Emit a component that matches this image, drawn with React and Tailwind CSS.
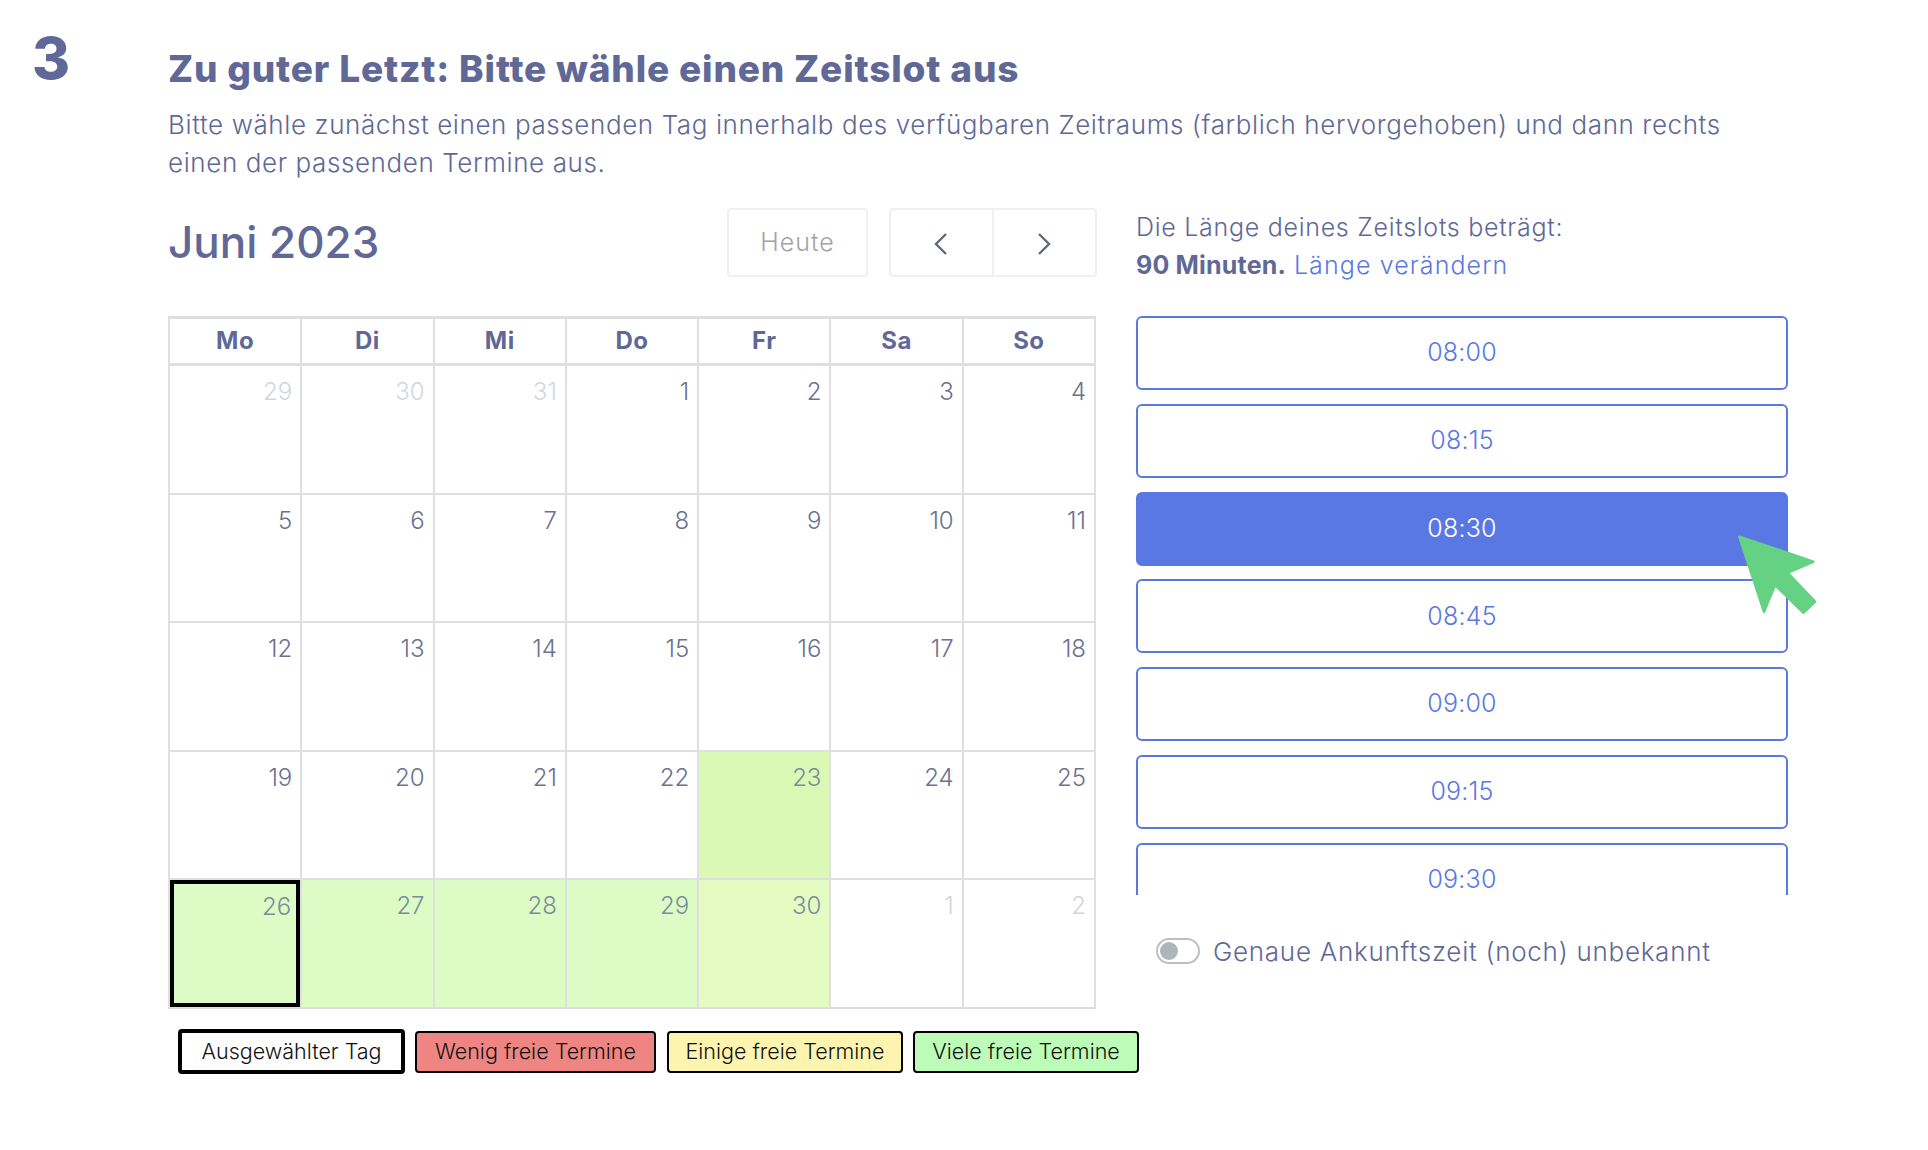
import React from "react";

const Heads = ["Mo", "Di", "Mi", "Do", "Fr", "Sa", "So"];
const Days = [
  ["29", 1, ""], ["30", 1, ""], ["31", 1, ""], ["1"], ["2"], ["3"], ["4"],
  ["5"], ["6"], ["7"], ["8"], ["9"], ["10"], ["11"],
  ["12"], ["13"], ["14"], ["15"], ["16"], ["17"], ["18"],
  ["19"], ["20"], ["21"], ["22"], ["23", 0, "bg-[#d9f9b4]"], ["24"], ["25"],
  ["26", 0, "bg-[#ddfcc5]", true], ["27", 0, "bg-[#ddfcc5]"], ["28", 0, "bg-[#ddfcc5]"], ["29", 0, "bg-[#ddfcc5]"], ["30", 0, "bg-[#e4fcc2]"], ["1", 1, ""], ["2", 1, ""],
];
const Slots = ["08:00", "08:15", "08:30", "08:45", "09:00", "09:15", "09:30"];

function Chevron({ dir }) {
  return (
    <svg width="16" height="24" viewBox="0 0 16 24" fill="none" stroke="#62697f" strokeWidth="2.4" className="mt-[3px] mr-[2px]">
      {dir === "l" ? <path d="M13 2 L3 12 L13 22" /> : <path d="M3 2 L13 12 L3 22" />}
    </svg>
  );
}

export default function App() {
  return (
    <div className="relative w-[1928px] h-[1150px] bg-white overflow-hidden flex text-[#5f6896] font-['Inter','Noto_Sans',sans-serif]">
      <div className="w-[168px] shrink-0 pl-[32px] pt-[22px] text-[58px] leading-[72px] font-extrabold">3</div>
      <div className="w-[1640px] pt-[44px]">
        <h1 className="text-[37px] leading-[50px] font-extrabold tracking-[0.85px] whitespace-nowrap">Zu guter Letzt: Bitte wähle einen Zeitslot aus</h1>
        <p className="mt-[12px] text-[26px] leading-[38px] font-light tracking-[0.6px] whitespace-nowrap">
          Bitte wähle zunächst einen passenden Tag innerhalb des verfügbaren Zeitraums (farblich hervorgehoben) und dann rechts
          <br />
          einen der passenden Termine aus.
        </p>
        <div className="mt-[26px] flex">
          <div className="w-[929px] shrink-0">
            <div className="h-[69px] flex items-center justify-between">
              <div className="text-[44px] leading-[66px] mb-[2px] font-medium">Juni 2023</div>
              <div className="flex items-center gap-[21px]">
                <div className="w-[141px] h-[69px] rounded-[4px] border-2 border-[#f0f0f0] flex items-center justify-center text-[25px] font-light tracking-[1px] text-[#a3a3a3]">Heute</div>
                <div className="w-[208px] h-[69px] rounded-[4px] border-2 border-[#f0f0f0] flex">
                  <div className="flex-1 border-r-2 border-[#f0f0f0] flex items-center justify-center"><Chevron dir="l" /></div>
                  <div className="flex-1 flex items-center justify-center"><Chevron dir="r" /></div>
                </div>
              </div>
            </div>
            <div className="mt-[39px] w-[928px] h-[693px] grid grid-cols-7 grid-rows-[47px_repeat(5,1fr)] border-l-2 border-t-[3px] border-[#dfdfe2]">
              {Heads.map((h) => (
                <div key={h} className="border-r-2 border-b-[3px] border-[#dfdfe2] flex items-center justify-center text-[24px] tracking-[0.5px] font-bold">{h}</div>
              ))}
              {Days.map(([d, muted, bg, sel], i) => (
                <div key={i} className={`border-r-2 border-b-2 border-[#dfdfe2] text-right ${bg || ""}`}>
                  <div className={`h-full text-[24px] leading-[36px] font-light ${muted ? "text-[#d3d5de]" : bg ? "text-[#7b8c9f]" : "text-[#6b7190]"} ${sel ? "border-4 border-black pt-[5px] pr-[5px]" : "pr-[8px] pt-[8px]"}`}>{d}</div>
                </div>
              ))}
            </div>
            <div className="mt-[20px] pl-[10px] flex items-center whitespace-nowrap text-[21.5px] font-light text-[#111]">
              <div className="shrink-0 w-[227px] h-[45px] rounded-[4px] border-4 border-black bg-white flex items-center justify-center">Ausgewählter Tag</div>
              <div className="shrink-0 ml-[10px] w-[241px] h-[42px] rounded-[4px] border-2 border-black bg-[#ee8582] flex items-center justify-center">Wenig freie Termine</div>
              <div className="shrink-0 ml-[11px] w-[236px] h-[42px] rounded-[4px] border-2 border-black bg-[#fdf4b0] flex items-center justify-center">Einige freie Termine</div>
              <div className="shrink-0 ml-[10px] w-[226px] h-[42px] rounded-[4px] border-2 border-black bg-[#bdfbb8] flex items-center justify-center">Viele freie Termine</div>
            </div>
          </div>
          <div className="ml-[39px] w-[652px] shrink-0">
            <div className="text-[25px] leading-[38px] font-light tracking-[0.72px] whitespace-nowrap">
              Die Länge deines Zeitslots beträgt:
              <br />
              <span className="font-bold tracking-[0.2px]">90 Minuten.</span> <span className="text-[#5a78e4] tracking-[1.1px]">Länge verändern</span>
            </div>
            <div className="mt-[32px] h-[579px] overflow-hidden">
              {Slots.map((s) => (
                <div key={s} className={`h-[74px] mb-[13.75px] rounded-[6px] border-2 border-[#5a78e4] flex items-center justify-center text-[25px] font-light tracking-[0.2px] ${s === "08:30" ? "bg-[#5a78e4] text-white" : "bg-white text-[#5a78e4]"}`}>{s}</div>
              ))}
            </div>
            <div className="mt-[43px] pl-[20px] flex items-center gap-[13px] h-[26px]">
              <div className="w-[44px] h-[26px] rounded-full border-2 border-[#bcbfc4] bg-white flex items-center pl-[2px]">
                <div className="w-[18px] h-[18px] rounded-full bg-[#adb5bd]" />
              </div>
              <div className="text-[26px] font-light tracking-[0.72px] whitespace-nowrap">Genaue Ankunftszeit (noch) unbekannt</div>
            </div>
          </div>
        </div>
      </div>
      <svg className="absolute left-[1700px] top-[500px]" width="130" height="130" viewBox="0 0 390 390">
        <path d="M118 110 L340 185 L262 218 L345 305 L310 338 L225 255 L192 335 Z" fill="#65d283" stroke="#65d283" strokeWidth="8" strokeLinejoin="round" />
      </svg>
    </div>
  );
}
